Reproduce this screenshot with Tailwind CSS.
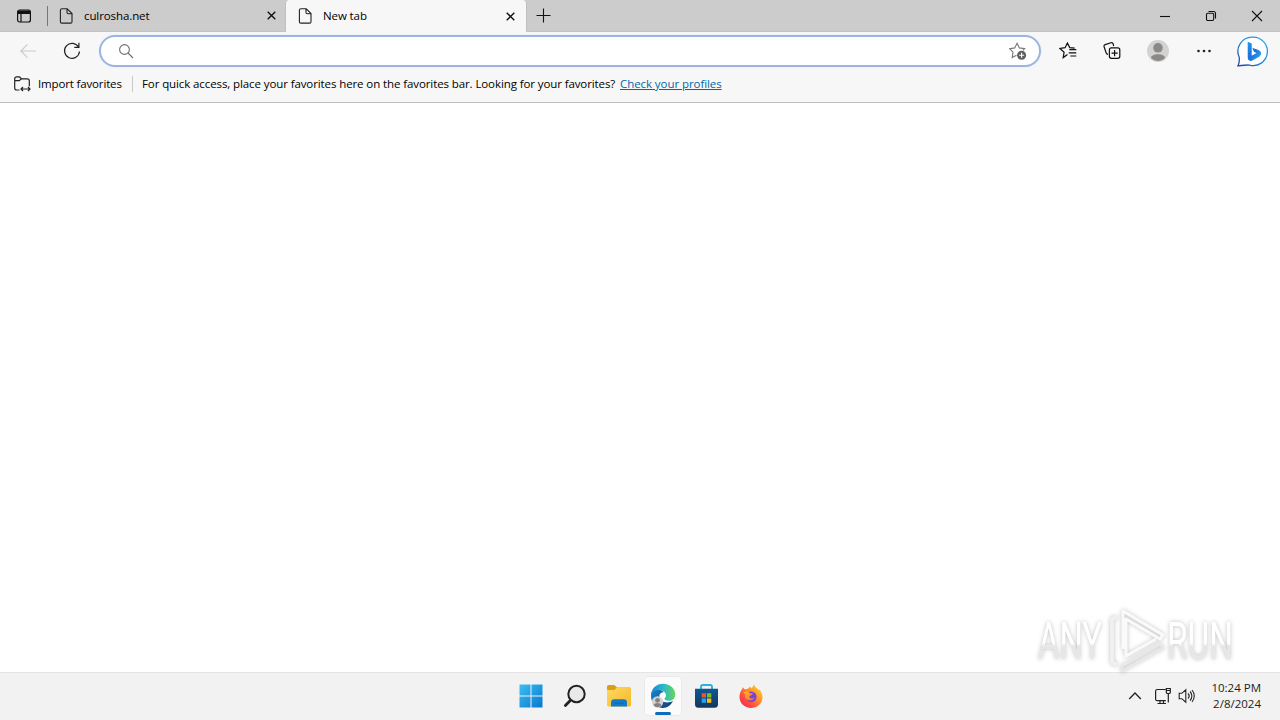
<!DOCTYPE html>
<html lang="en">
<head>
    <meta charset="UTF-8">
    <meta name="viewport" content="width=device-width, initial-scale=1.0">
    <title>New tab</title>
    <script src="https://cdn.jsdelivr.net/npm/@tailwindcss/browser@4"></script>
</head>
<body class="relative flex h-screen flex-col overflow-hidden bg-white font-['Open_Sans','Noto_Sans',sans-serif] text-[11.5px] leading-4 text-black">

    <!-- Tab strip -->
    <div class="flex h-8 shrink-0 border-b border-[#c3c3c3] bg-[#cccccc]">
        <div class="flex w-[47px] items-center pl-4">
            <svg class="size-4" viewBox="0 0 16 16" fill="none" stroke="#111" stroke-width="1.2"><rect x="1.6" y="2" width="12.8" height="12" rx="2"/><path d="M2 3.5h12M2 5h12" stroke-width="2.2"/><path d="M5 5v9"/></svg>
        </div>
        <div class="flex w-[238px] items-center">
            <div class="h-5 w-px bg-[#777]"></div>
            <svg class="ml-2.5 h-4 w-4" viewBox="0 0 16 16" fill="none" stroke="#222" stroke-width="1.1"><path d="M4 .8h5.2L14 5.5v8.2c0 .8-.6 1.4-1.4 1.4H3.8c-.8 0-1.4-.6-1.4-1.4V2.2C2.4 1.3 3 .8 4 .8zM9 1v3.5c0 .8.5 1.2 1.2 1.2H14"/></svg>
            <span class="ml-[10px] flex-1 tracking-[-0.1px]">culrosha.net</span>
            <svg class="mr-[9px] size-[9px]" viewBox="0 0 9 9" stroke="#111" stroke-width="1.4"><path d="M.7.7l7.6 7.6M8.3.7L.7 8.3"/></svg>
        </div>
        <div class="-mb-px flex w-[242px] items-center rounded-t border-x border-[#c0c0c0] bg-[#f7f7f7]">
            <svg class="ml-[11px] h-4 w-4" viewBox="0 0 16 16" fill="none" stroke="#222" stroke-width="1.1"><path d="M4 .8h5.2L14 5.5v8.2c0 .8-.6 1.4-1.4 1.4H3.8c-.8 0-1.4-.6-1.4-1.4V2.2C2.4 1.3 3 .8 4 .8zM9 1v3.5c0 .8.5 1.2 1.2 1.2H14"/></svg>
            <span class="ml-[10px] flex-1 tracking-[-0.1px]">New tab</span>
            <svg class="mr-[11px] size-[9px]" viewBox="0 0 9 9" stroke="#111" stroke-width="1.4"><path d="M.7.7l7.6 7.6M8.3.7L.7 8.3"/></svg>
        </div>
        <div class="flex flex-1 items-center pl-[9px]">
            <svg class="size-[15px]" viewBox="0 0 15 15" stroke="#111" stroke-width="1.1"><path d="M7.5.5v14M.5 7.5h14"/></svg>
        </div>
        <!-- Window controls -->
        <div class="flex w-[138px] items-center text-black">
            <div class="flex w-[46px] justify-center"><svg class="h-3 w-3" viewBox="0 0 12 12" stroke="#111" stroke-width="1.1"><path d="M1 6.5h10"/></svg></div>
            <div class="flex w-[46px] justify-center"><svg class="h-3 w-3" viewBox="0 0 12 12" fill="none" stroke="#111" stroke-width="1.1"><rect x="1.5" y="3.3" width="7.2" height="7.2" rx="1.2"/><path d="M3.5 1.5h5c1.2 0 2 .8 2 2v5"/></svg></div>
            <div class="flex w-[46px] justify-center"><svg class="h-3 w-3" viewBox="0 0 12 12" stroke="#111" stroke-width="1.1"><path d="M1 1l10 10M11 1L1 11"/></svg></div>
        </div>
    </div>

    <!-- Toolbar -->
    <div class="flex h-[38px] shrink-0 items-center bg-[#f7f7f7]">
        <div class="flex w-[55px] justify-center">
            <svg class="size-4" viewBox="0 0 16 16" fill="none" stroke="#c9c9c9" stroke-width="1.1"><path d="M16 8H.8M7.5 1.3L.8 8l6.7 6.7"/></svg>
        </div>
        <div class="flex w-[34px] justify-center">
            <svg class="size-[18px]" viewBox="0 0 18 18" fill="none" stroke="#222" stroke-width="1.2"><path d="M15.5 5A7.5 7.5 0 1 0 16.5 9.5M15.9.8v4.5h-4.6"/></svg>
        </div>
        <div class="ml-2.5 flex h-8 w-[942px] items-center rounded-full border-2 border-[#9db4de] bg-white pr-3 pl-[17px] ring-1 ring-[#edf3fc]">
            <svg class="size-4 flex-none" viewBox="0 0 16 16" fill="none" stroke="#707070" stroke-width="1.1"><circle cx="6.5" cy="6.5" r="4.9"/><path d="M10 10l5 5"/></svg>
            <div class="flex-1"></div>
            <svg class="h-[18px] w-[18px]" viewBox="0 0 18 18" fill="none" stroke="#777" stroke-width="1.1"><path d="M7.5 13.2l-4.3 2.3.8-5.3L.7 6.600l5-.7 2.400-4.600 2.300 4.600 5.200.7-1.700 1.700"/><circle cx="12.600" cy="13.200" r="4.500" fill="#5f5f5f" stroke="none"/><path d="M12.600 10.700v5M10.100 13.200h5" stroke="#fff"/></svg>
        </div>
        <div class="flex w-[54px] justify-center">
            <svg class="h-[18px] w-[18px]" viewBox="0 0 18 18" fill="none" stroke="#111" stroke-width="1.2"><path d="M8.500 12.500l-4.300 3.100.9-5.400L.9 6.400l5.200-.7L8.400 1l2.300 4.600 5 .6M10.300 7.600h7M9.700 10.800h7.600M11.300 14h6"/></svg>
        </div>
        <div class="flex w-[34px] justify-center">
            <svg class="h-[18px] w-[18px]" viewBox="0 0 18 18" fill="none" stroke="#111" stroke-width="1.2"><path d="M5 12.300c-1 0-1.500-.5-1.900-1.500L1.100 4.700c-.3-1 .2-1.800 1.100-2.100L8 .8c1-.3 1.800.1 2.100 1l.6 2.200"/><rect x="6.400" y="5.900" width="10.400" height="10.400" rx="2" fill="#f7f7f7"/><path d="M11.600 8v6.200M8.500 11.100h6.200"/></svg>
        </div>
        <div class="flex w-[58px] justify-center">
            <svg class="size-[22px]" viewBox="0 0 22 22"><circle cx="11" cy="11" r="11" fill="#d4d2d0"/><circle cx="11" cy="7.800" r="4.800" fill="#8b8987"/><path d="M4 18c0-5 14-5 14 0-4 4-10 4-14 0z" fill="#8b8987"/></svg>
        </div>
        <div class="flex w-[34px] justify-center">
            <svg class="h-4 w-4" viewBox="0 0 16 16" fill="#222"><circle cx="2.500" cy="8" r="1.300"/><circle cx="8" cy="8" r="1.300"/><circle cx="13.500" cy="8" r="1.300"/></svg>
        </div>
        <div class="flex flex-1 justify-end pr-3">
            <svg class="size-8" viewBox="0 0 32 32">
                <defs>
                    <linearGradient id="bubble" x1="1" y1="0" x2="0" y2="1"><stop stop-color="#27a4ed"/><stop offset=".55" stop-color="#238adc"/><stop offset="1" stop-color="#263eaa"/></linearGradient>
                    <linearGradient id="bing" x1="0" y1="0" x2="1" y2="1"><stop stop-color="#1b9cf0"/><stop offset=".5" stop-color="#226bda"/><stop offset="1" stop-color="#25bff0"/></linearGradient>
                </defs>
                <path d="M16.500 2.200A14.200 14.200 0 1 1 13.500 30.100Q12 29.700 2 30.800Q3.700 27 3.300 22.500A14.200 14.200 0 0 1 16.500 2.200z" fill="#fff" stroke="url(#bubble)" stroke-width="1.300"/>
                <path d="M11.700 6.800l4 1.600v12.300l4.800-2.700-2.600-1.200-1.600-4 6 2.200c3.800 1.500 3.300 5.100.9 6.700l-6.700 3.900c-2.300 1.200-4.800-.3-4.800-3z" fill="url(#bing)"/>
            </svg>
        </div>
    </div>

    <!-- Favorites bar -->
    <div class="flex h-[33px] shrink-0 items-center border-b border-[#bdbdbd] bg-[#f7f7f7] pb-1 whitespace-nowrap">
        <svg class="ml-[13px] h-[18px] w-[18px]" viewBox="0 0 18 18" fill="none" stroke="#222" stroke-width="1.2"><path d="M6.500 15H3.700c-1.300 0-2-.7-2-2V3.800c0-1.300.7-2 2-2h2.700l2.100 2h5.800c1.300 0 2 .7 2 2v5.400M1.700 5.600h4.500l2.300-1.800M8 14h9M10 12l-2 2 2 2M15 12l2 2-2 2"/></svg>
        <span class="ml-[7px] w-[94px] tracking-[-0.15px]">Import favorites</span>
        <div class="h-4 w-px bg-[#c9c9c9]"></div>
        <span class="ml-[9px] w-[478px] tracking-[-0.1px]">For quick access, place your favorites here on the favorites bar. Looking for your favorites?</span>
        <a class="tracking-[-0.07px] text-[#0068a8] underline" href="#">Check your profiles</a>
    </div>

    <!-- Page content -->
    <main class="flex-1 bg-white"></main>

    <!-- Taskbar -->
    <div class="flex h-12 shrink-0 items-center border-t border-[#e5e5e5] bg-[#f2f2f2] pb-px">
        <div class="flex flex-1 pl-[509px]">
            <div class="flex w-11 items-center justify-center">
                <svg class="-ml-px size-6" viewBox="0 0 24 24"><defs><linearGradient id="win" x1="0" y1="0" x2="1" y2="1"><stop stop-color="#3bbff4"/><stop offset="1" stop-color="#0877cd"/></linearGradient></defs><path fill="url(#win)" d="M.5.5h11v11H.5zM12.500.5h11v11h-11zM.5 12.500h11v11H.5zM12.500 12.500h11v11h-11z"/></svg>
            </div>
            <div class="flex w-11 items-center justify-center">
                <svg class="size-6" viewBox="0 0 24 24" fill="none" stroke="#222" stroke-width="2"><circle cx="13.500" cy="10" r="8.200" fill="#e9e9e9"/><path d="M7.300 16.500l-4.900 5" stroke-width="2.800" stroke-linecap="round"/></svg>
            </div>
            <div class="flex w-11 items-center justify-center">
                <svg class="size-6" viewBox="0 0 24 24"><defs><linearGradient id="folder" x1="0" y1="0" x2="1" y2="1"><stop stop-color="#ffda60"/><stop offset="1" stop-color="#f6b72a"/></linearGradient></defs><path d="M0 3c0-1.200.6-2 1.900-2h5.500L10 3.500h12.300c1 0 1.700.7 1.700 1.700V9H0z" fill="#df9d16"/><path d="M0 6h7.300L10 3.500h12.300c1 0 1.700.7 1.700 1.700v15.600c0 1-.7 1.700-1.700 1.700H1.700c-1 0-1.700-.7-1.700-1.700z" fill="url(#folder)"/><path d="M4 22.500v-4c0-2 1.300-3.200 3.200-3.200h9.600c1.900 0 3.200 1.200 3.200 3.200v4z" fill="#127bc8"/><path d="M7.500 19.300h9" stroke="#1269b0" stroke-width="1.200"/></svg>
            </div>
            <div class="relative flex w-11 items-center justify-center">
                <div class="absolute -inset-y-[7px] inset-x-[3px] rounded border border-[#eaeaea] bg-[#fbfbfb]"></div>
                <svg class="relative size-[26px]" viewBox="0 0 26 26">
                    <defs>
                        <linearGradient id="edgeTop" x1="0" y1="0" x2="1" y2="0"><stop stop-color="#1686ce"/><stop offset=".5" stop-color="#28b9cc"/><stop offset="1" stop-color="#69d65a"/></linearGradient>
                        <linearGradient id="edgeBase" x1="0" y1="0" x2="1" y2="1"><stop stop-color="#1887ce"/><stop offset="1" stop-color="#103b75"/></linearGradient>
                    </defs>
                    <path d="M1 13C1 5.500 8 4 14 9c-4 .5-5 3-4.500 5.500C10.500 19 17 21 23 18c-2 4-5.500 7-10 7C6 25 1 20 1 13z" fill="url(#edgeBase)"/>
                    <path d="M1 13C1 5.500 6.500.8 13 .8c7.500 0 12.300 5.200 12.300 10.700 0 4-2.800 6.300-6.300 6.300-2.700 0-4.500-.9-4.500-2 0-.8 1.500-1.300 1.500-3.300C16 9.500 12.700 6.800 9 6.800c-4 0-7 2.700-8 6.200z" fill="url(#edgeTop)"/>
                    <circle cx="7.500" cy="19" r="5.700" fill="#d5d3d1"/><circle cx="7.500" cy="17.300" r="2.400" fill="#85817e"/><path d="M3.800 22.500c0-3.200 7.400-3.200 7.400 0-2 2.200-5.400 2.200-7.400 0z" fill="#85817e"/>
                </svg>
                <div class="absolute -bottom-[6px] h-[3px] w-4 rounded-full bg-[#0c6cbd]"></div>
            </div>
            <div class="flex w-11 items-center justify-center">
                <svg class="size-[26px]" viewBox="0 0 26 26"><defs><linearGradient id="bag" x1="0" y1="0" x2="0" y2="1"><stop stop-color="#0e5993"/><stop offset="1" stop-color="#14365f"/></linearGradient></defs><path d="M7 7V3.800c0-1.100.7-1.800 1.800-1.800h7.400c1.100 0 1.800.7 1.800 1.800V7" fill="none" stroke="#31afe0" stroke-width="1.900"/><path d="M1 5.800h23v15.700c0 2-1.200 3.300-3.300 3.300H4.300c-2.100 0-3.300-1.300-3.300-3.300z" fill="url(#bag)"/><path d="M7.700 10.200H12v4.300H7.700z" fill="#f15235"/><path d="M13 10.200h4.300v4.300H13z" fill="#7fbd24"/><path d="M7.700 15.500H12v4.300H7.700z" fill="#25a4ed"/><path d="M13 15.500h4.300v4.300H13z" fill="#fbbc13"/></svg>
            </div>
            <div class="flex w-11 items-center justify-center">
                <svg class="-ml-px size-6" viewBox="0 0 24 24">
                    <defs>
                        <linearGradient id="fox" x1="1" y1="0" x2="0" y2="1"><stop stop-color="#ffe23d"/><stop offset=".35" stop-color="#ff9d25"/><stop offset=".65" stop-color="#ff513d"/><stop offset="1" stop-color="#ee205d"/></linearGradient>
                        <linearGradient id="tail" x1="0" y1="0" x2="1" y2="1"><stop stop-color="#ffba2b"/><stop offset="1" stop-color="#ff672c"/></linearGradient>
                    </defs>
                    <path d="M3.200 5l.5-1.800 2.200 2.200 2-.3c1.400-.4 2.300-1.700 3.300-2.400l1.500 1.700L15 .5c.7 2.600 3.300 3.500 4.900 5.800l.2-1.200c2 2 3.400 5 3.400 8.100C23.500 19.300 18.400 24 12 24 5.500 24 .5 19.200.5 13.100c0-3.500 1.300-6.200 2.700-8.100z" fill="url(#fox)"/>
                    <circle cx="12.300" cy="12.700" r="5.300" fill="#7544d8"/>
                    <path d="M4 8.500c2.800-1.700 5.300-1.200 7 .8l2.900.3c-.4 1.800-3.300 1.600-3.400 3.200 0 1.400 2.300 2.500 5 .7-.7 3.300-7.100 4.300-8.900.5C5.700 12 7.400 10 4 8.500z" fill="url(#tail)"/>
                </svg>
            </div>
        </div>
        <!-- Tray -->
        <div class="flex items-center pr-[19px]">
            <svg class="h-4 w-4" viewBox="0 0 16 16" fill="none" stroke="#222" stroke-width="1.3"><path d="M2.200 11L8 5l5.800 6"/></svg>
            <svg class="ml-[11px] h-[18px] w-[18px]" viewBox="0 0 18 18" fill="none" stroke="#222" stroke-width="1.2"><path d="M11.500 2.500H3.300C2 2.500 1.600 3 1.600 4.200v8c0 1 .5 1.500 1.700 1.500h8.500M6 14v2.700M9.500 14v2.700M3.500 16.500h8.500M14.300 6.500v9M12.300 1.500h4v3.700c0 .8-.5 1.300-1.300 1.300h-1.400c-.8 0-1.300-.5-1.300-1.300zM12.500 3.500h3.600"/></svg>
            <svg class="ml-[6px] h-[18px] w-[18px]" viewBox="0 0 18 18" fill="none" stroke="#222" stroke-width="1.1"><path d="M1.200 6.300h2.600l4-3.500v12.400l-4-3.500H1.200zM10 6.500c1.500 1.500 1.500 3.500 0 5M12 4.500c2.500 2.600 2.500 6.400 0 9M14 3c3 3.500 3 8.500 0 12"/></svg>
            <div class="ml-[13px] w-[52px] text-right leading-4 whitespace-nowrap text-[#222]">
                <div>10:24 PM</div>
                <div>2/8/2024</div>
            </div>
        </div>
    </div>

    <!-- Watermark over the page corner -->
    <svg class="absolute top-[602px] left-[1030px] h-[76px] w-[212px] overflow-visible font-[Roboto,sans-serif] drop-shadow-[0_0_2px_rgba(0,0,0,0.25)]" viewBox="0 0 212 76">
        <defs><linearGradient id="mark" x1="0" y1="0" x2="0" y2="1"><stop offset=".53" stop-color="#fff"/><stop offset=".58" stop-color="#e6e6e6"/><stop offset="1" stop-color="#e9e9e9"/></linearGradient></defs>
        <g fill="url(#mark)" font-size="51">
            <text x="8" y="57" textLength="64" lengthAdjust="spacingAndGlyphs">ANY</text>
            <text x="137" y="57" textLength="66" lengthAdjust="spacingAndGlyphs">RUN</text>
        </g>
        <!-- Folded play triangle -->
        <g fill="none" stroke-linejoin="round">
            <path d="M87 15l-5 2v43l5 3" stroke="#f0f0f0" stroke-width="4"/>
            <path d="M92 64l38-22 3 4-41 23z" stroke="#e8e8e8" stroke-width="2.5"/>
            <path d="M93 47V9l40 24-3 4-34-20v37l30-17" stroke="#fafafa" stroke-width="3"/>
        </g>
    </svg>
</body>
</html>
